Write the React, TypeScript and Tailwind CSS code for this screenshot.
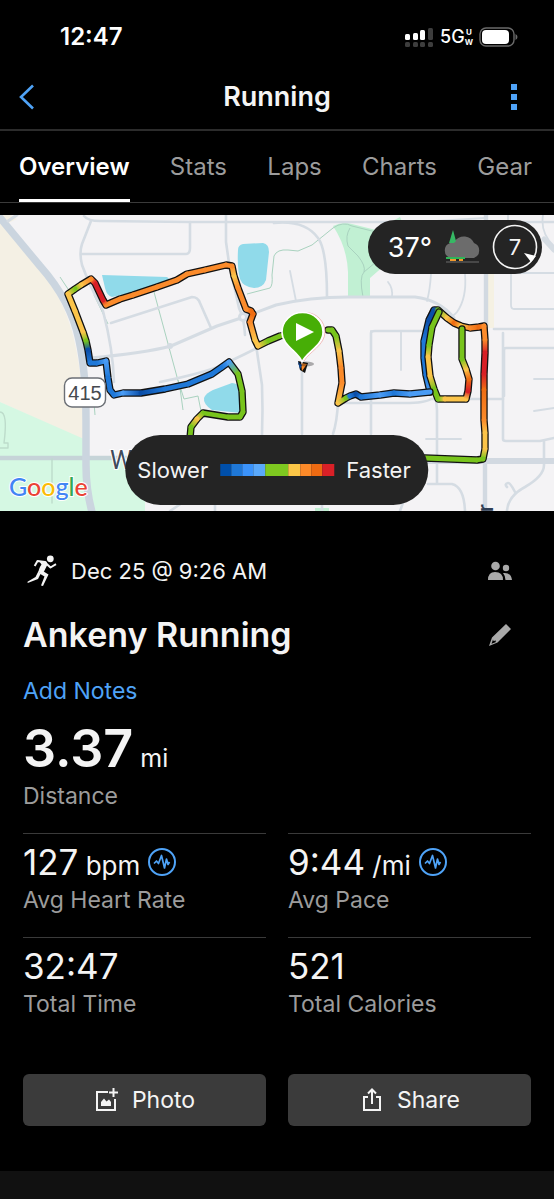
type RoutePoint = [number, number, string]

const navy = "#0b4ea8"
const blue = "#1f78d8"
const sky = "#4a9cf5"
const green = "#78c41c"
const yellow = "#fbc44a"
const orange = "#fb8b2b"
const deep = "#ee6c12"
const red = "#d81f26"

const westRoute: RoutePoint[] = [
  [302, 331, green],
  [280, 336, green],
  [268, 341, green],
  [258, 346, yellow],
  [255, 340, yellow],
  [250, 322, orange],
  [253, 314, deep],
  [251, 311, deep],
  [246, 309, orange],
  [238, 288, orange],
  [234, 276, yellow],
  [232, 266, orange],
  [226, 265, orange],
  [205, 270, orange],
  [187, 274, orange],
  [177, 280, orange],
  [157, 287, orange],
  [133, 295, orange],
  [120, 299, orange],
  [106, 305, orange],
  [103, 300, red],
  [95, 283, red],
  [91, 279, orange],
  [81, 285, yellow],
  [75, 289, green],
  [68, 294, yellow],
  [75, 311, yellow],
  [83, 332, yellow],
  [86, 341, green],
  [88, 350, navy],
  [90, 363, blue],
  [97, 363, blue],
  [106, 361, sky],
  [108, 378, blue],
  [110, 390, blue],
  [114, 395, blue],
  [123, 393, sky],
  [141, 393, navy],
  [165, 389, blue],
  [188, 384, blue],
  [212, 374, blue],
  [222, 367, blue],
  [229, 362, sky],
  [238, 374, green],
  [242, 391, green],
  [243, 412, green],
  [240, 417, green],
  [228, 417, green],
  [203, 413, green],
  [197, 419, yellow],
  [191, 427, green],
  [190, 438, green],
]

const eastRoute: RoutePoint[] = [
  [328, 330, green],
  [332, 330, green],
  [336, 336, green],
  [339, 351, yellow],
  [341, 368, orange],
  [342, 383, orange],
  [338, 403, yellow],
  [346, 398, green],
  [350, 396, blue],
  [356, 394, navy],
  [361, 397, blue],
  [380, 395, sky],
  [394, 393, blue],
  [410, 394, sky],
  [430, 392, sky],
]

const eastOuter: RoutePoint[] = [
  [430, 392, sky],
  [426, 375, blue],
  [424, 358, blue],
  [424, 341, blue],
  [429, 320, navy],
  [434, 310, navy],
  [438, 310, green],
  [447, 318, yellow],
  [454, 323, deep],
  [461, 326, yellow],
  [470, 328, orange],
  [479, 327, deep],
  [484, 326, orange],
  [485, 340, orange],
  [485, 353, red],
  [484, 374, red],
  [484, 390, deep],
  [484, 420, orange],
  [485, 433, yellow],
  [485, 449, yellow],
  [483, 459, green],
  [477, 460, green],
  [425, 458, green],
]

const eastInner: RoutePoint[] = [
  [439, 312, green],
  [432, 327, green],
  [429, 345, green],
  [428, 357, yellow],
  [430, 376, yellow],
  [434, 389, green],
  [438, 399, green],
  [445, 399, yellow],
  [466, 399, yellow],
  [468, 391, red],
  [469, 379, deep],
  [466, 369, yellow],
  [462, 359, green],
  [462, 329, green],
]

function Route({ id, points }: { id: string; points: RoutePoint[] }) {
  const line = points.map(([x, y]) => `${x},${y}`).join(" ")
  const parts = points.slice(1).map((to, i) => ({ from: points[i], to, key: `${id}-${i}` }))

  return (
    <g fill="none" strokeLinejoin="round" strokeLinecap="round">
      <defs>
        {parts.map(({ from, to, key }) => (
          <linearGradient
            key={key}
            id={key}
            gradientUnits="userSpaceOnUse"
            x1={from[0]}
            y1={from[1]}
            x2={to[0]}
            y2={to[1]}
          >
            <stop offset="0" stopColor={from[2]} />
            <stop offset="1" stopColor={to[2]} />
          </linearGradient>
        ))}
      </defs>
      <polyline points={line} stroke="#111" strokeWidth="7.4" />
      {parts.map(({ from, to, key }) => (
        <path
          key={key}
          d={`M${from[0]} ${from[1]}L${to[0]} ${to[1]}`}
          stroke={`url(#${key})`}
          strokeWidth="4.8"
        />
      ))}
    </g>
  )
}

function MapDrawing() {
  return (
    <svg
      viewBox="0 215 554 296"
      preserveAspectRatio="xMidYMid slice"
      className="block h-full w-full"
      role="img"
      aria-label="Route map"
    >
      <rect x="0" y="215" width="554" height="296" fill="#f4f3f5" />

      {/* Land and parks */}
      <path d="M0 222C32 258 60 290 70 325C80 355 84 400 84 440L0 402Z" fill="#f4f0e4" />
      <path d="M0 215H10L17 219L8 223L0 217Z" fill="#f4f0e4" />
      <path d="M0 402L84 439V511H0Z" fill="#d5f8e3" />
      <path d="M84 460H145V511H84Z" fill="#d5f8e3" />
      <path d="M333 226Q343 221 352 224L376 230L400 217L410 240L385 265L370 278V297H348V272Q347 247 333 226Z" fill="#c1f0d3" />
      <path d="M488 274H494V328H488Z" fill="#f5f1e3" />
      <path d="M315 508H329V511H315Z" fill="#c1f0d3" />

      {/* Water */}
      <path d="M102 275L167 277L174 283L112 297Q107 296 105 288Z" fill="#90daea" />
      <path d="M238 250Q238 245 243 244L263 243Q269 244 269 252L266 280Q263 288 254 288Q243 287 240 279Q237 268 238 250Z" fill="#90daea" />
      <path d="M204 398Q206 393 213 390L232 383Q238 383 241 390L241 413L212 410Q203 404 204 398Z" fill="#90daea" />

      {/* Trails */}
      <g fill="none" stroke="#a9d2bf" strokeWidth="1">
        <path d="M60 277L70 292M94 295L108 324M154 292L180 388L183 410M178 380L184 399L198 396L201 411" />
        <path d="M92 378L95 415" />
        <path d="M247 294L270 288Q273 285 272 275L274 256Q277 249 288 250L298 251L312 245L333 228Q343 221 352 226L376 232" />
        <path d="M350 228Q345 236 348 246L358 256Q366 266 364 272Q359 277 363 297M364 272L376 262" />
      </g>

      {/* Minor streets */}
      <g fill="none" stroke="#d5dce3" strokeLinecap="round" strokeLinejoin="round">
        <g strokeWidth="1.8">
          <path d="M290 271L296 301M388 282Q393 288 392 297M431 274Q430 290 427 301M465 274Q467 298 457 312Q452 318 446 318" />
          <path d="M371 331V434M401 331V370M508 215V230M511 273V305Q511 309 514 309H554M511 273H554" />
          <path d="M426 439H461M534 379H554M534 411L554 408" />
          <path d="M543 215Q540 233 554 246M485 218L420 222" />
        </g>
        <g strokeWidth="2.6">
          <path d="M84 216Q88 221 100 221L190 222H554" />
          <path d="M91 221L82 244Q79 253 82 265Q89 284 103 311Q113 349 114 382" />
          <path d="M82 254H186Q190 254 190 248V222" />
          <path d="M226 215V242L229 263L239 308Q244 317 245 335" />
          <path d="M111 323L192 297Q198 297 200 303L211 328" />
          <path d="M90 358Q145 353 171 346L217 326L244 317L276 305Q310 297 348 297H415Q440 300 454 318" strokeWidth="3" />
          <path d="M160 382Q195 375 218 367L245 354L257 348" />
          <path d="M256 345L262 385Q263 410 262 435" />
          <path d="M274 223Q305 220 318 238Q327 250 327 297" />
          <path d="M302 370V434M338 402Q337 422 333 434M344 403H405Q425 403 431 399H503" />
          <path d="M371 434V333Q371 331 375 331H424" />
          <path d="M436 399L437 410V483M428 484H452Q464 487 465 511M404 500L400 511M170 511L182 503M215 505V511" />
          <path d="M503 333V439Q503 441 506 441H540L554 438M504 396V350Q504 348 506 348H554M485 455V511" />
          <path d="M544 441V465Q544 476 525 487Q508 496 507 511M507 487Q504 484 508 483Q510 482 515 492" />
          <path d="M322 505V511M494 329H554" />
        </g>
        <path d="M486 215V328M485 461V511" strokeWidth="4.4" stroke="#d2d9e1" />
        <path d="M425 461H554" strokeWidth="6" stroke="#d2d9e1" />
        <path d="M544 239L554 250" strokeWidth="5" />
        <path d="M0 458H150" strokeWidth="4.4" stroke="#c6d4d8" />
        <path d="M52 459V503M0 412Q8 412 4 443H8V448H0" strokeWidth="1.4" stroke="#bddccb" />
        <path d="M-3 214Q10 230 40 266Q71 301 79 340Q86 372 86 420V465Q86 490 92 512" strokeWidth="7.5" stroke="#cbd5df" />
        <path d="M8 221L17 215" strokeWidth="3" />
      </g>
      <circle cx="243" cy="317" r="5" fill="#d5dce3" />
      <circle cx="243" cy="317" r="2" fill="#f4f3f5" />
      <circle cx="170" cy="346" r="3" fill="#d5dce3" />

      <Route id="west" points={westRoute} />
      <Route id="outer" points={eastOuter} />
      <Route id="inner" points={eastInner} />
      <Route id="east" points={eastRoute} />

      {/* Start pin */}
      <path d="M298 361L300 370L305 373L308 363Z" fill="#111" />
      <path d="M301 363L302 371L307 364Z" fill={orange} />
      <path d="M298 362L300 369L302 365Z" fill={navy} />
      <ellipse cx="306" cy="364" rx="8" ry="2.500" fill="#000" opacity="0.3" />
      <path d="M304 361C299 352 286 345 286 332A19 19 0 0 1 325 332C325 345 309 352 304 361Z" fill="#fff" stroke="#eaa" strokeWidth="0.8" />
      <path
        d="M302 362C299 352 282 346 282 332A20 19 0 0 1 323 332C323 346 306 352 302 362Z"
        fill="#47ae06"
        stroke="#fff"
        strokeWidth="1.6"
      />
      <path d="M296 323L314 332L296 341Z" fill="#fff" />

      {/* Road shield */}
      <rect x="64.5" y="378" width="41" height="29" rx="7.5" fill="#fff" stroke="#6b6f75" strokeWidth="1.4" />
      <text x="85" y="400" textAnchor="middle" fontSize="20" fill="#45494f" className="font-['Liberation_Sans',sans-serif]">
        415
      </text>
      <text
        x="110"
        y="469"
        fontSize="25"
        fill="#3f4b5c"
        stroke="#fff"
        strokeWidth="2"
        paintOrder="stroke"
        className="font-['Roboto',sans-serif]"
      >
        W
      </text>
      <text
        transform="translate(493 512) rotate(-90)"
        fontSize="22"
        fontWeight="500"
        fill="#2f3f55"
        className="font-['Roboto',sans-serif]"
      >
        r
      </text>

      <text
        x="9"
        y="496"
        fontSize="25"
        fontWeight="500"
        stroke="#fff"
        strokeWidth="2"
        paintOrder="stroke"
        className="font-['Lato',sans-serif]"
      >
        <tspan fill="#4285f4">G</tspan>
        <tspan fill="#ea4335">o</tspan>
        <tspan fill="#fbbc05">o</tspan>
        <tspan fill="#4285f4">g</tspan>
        <tspan fill="#34a853">l</tspan>
        <tspan fill="#ea4335">e</tspan>
      </text>
    </svg>
  )
}

function Weather() {
  return (
    <div className="absolute top-[5px] right-3 flex h-[54px] items-center gap-[9px] rounded-full bg-[#242424] pr-1 pl-5">
      <span className="text-[27px] leading-none text-white">37°</span>
      <svg width="42" height="36" viewBox="0 0 42 36" aria-hidden="true">
        <path d="M9 29A8 8 0 0 1 9 14A5 5 0 0 1 14 12A11 11 0 0 1 33 14A8 8 0 0 1 33 29Z" fill="#6c6c6c" />
        <path d="M12 1L15 12L13 14L8 14Z" fill="#36b864" />
        <path d="M5 28H24V30H5Z" fill="#2fb457" />
        <path d="M9 30H15V32H9ZM18 30H22V32H18Z" fill="#f29a2e" />
        <path d="M5 32.5H38V33.5H5Z" fill="#6c6c6c" />
      </svg>
      <svg width="46" height="46" viewBox="0 0 46 46" role="img" aria-label="Wind 7">
        <circle cx="23" cy="23" r="21.5" fill="none" stroke="#f4f4f4" strokeWidth="1.6" />
        <text x="23" y="31" textAnchor="middle" fontSize="22" fill="#f4f4f4">
          7
        </text>
        <path d="M32 29L44 32L39 38Z" fill="#fff" />
      </svg>
    </div>
  )
}

function PaceLegend() {
  return (
    <div className="absolute bottom-[6px] left-1/2 flex h-[70px] -translate-x-1/2 items-center gap-3 rounded-full bg-[#242424] pr-[18px] pl-3 text-[22px] text-[#f4f4f4]">
      <span>Slower</span>
      <div className="flex h-3">
        <i className="w-[11px] bg-[#004faa]" />
        <i className="w-[11px] bg-[#1f78d8]" />
        <i className="w-[11px] bg-[#3b93fb]" />
        <i className="w-[12px] bg-[#5aa9fb]" />
        <i className="w-[23px] bg-[#7ec820]" />
        <i className="w-[12px] bg-[#fbc647]" />
        <i className="w-[11px] bg-[#fc8a29]" />
        <i className="w-[11px] bg-[#ee6a12]" />
        <i className="w-[12px] bg-[#d92027]" />
      </div>
      <span>Faster</span>
    </div>
  )
}

function PulseIcon() {
  return (
    <svg width="28" height="28" viewBox="0 0 28 28" fill="none" stroke="#4fa3f7" aria-hidden="true">
      <circle cx="14" cy="14" r="13" strokeWidth="2" />
      <path
        d="M6 15.5L8.5 13L10.500 15.5L13.500 7.5L16.500 20L18.500 11L20 16.500L21.500 14"
        strokeWidth="1.7"
        strokeLinejoin="round"
      />
    </svg>
  )
}

function Stat({ value, unit, label, pulse }: { value: string; unit?: string; label: string; pulse?: boolean }) {
  return (
    <div className="h-[104px] border-t border-[#3a3a3a] pt-2">
      <div className="flex h-10 items-center gap-2">
        <p className="text-[35px] leading-10">
          {value}
          {unit && <span className="text-[26px] leading-none"> {unit}</span>}
        </p>
        {pulse && <PulseIcon />}
      </div>
      <p className="mt-0.5 text-[23px] leading-8 text-[#9c9c9c]">{label}</p>
    </div>
  )
}

export default function App() {
  return (
    <main className="min-h-screen bg-black font-['Inter',sans-serif] text-[#f4f4f4]">
      {/* Status bar */}
      <div className="flex h-16 items-center justify-between pt-2.5 pr-9 pl-[60px]">
        <span className="text-[24px] leading-none font-semibold text-white">12:47</span>
        <div className="flex items-center gap-1.5">
          <svg width="30" height="22" viewBox="0 0 30 22" aria-hidden="true">
            <g fill="#fff">
              <rect x="1" y="8" width="5" height="6" rx="1.5" />
              <rect x="9" y="7" width="5" height="7" rx="1.5" />
              <rect x="16" y="4" width="5" height="10" rx="1.5" />
            </g>
            <g fill="#3d3d3d">
              <rect x="24" y="2" width="5" height="12" rx="1.5" />
              <rect x="1" y="16" width="5" height="5" rx="1.5" />
              <rect x="9" y="16" width="5" height="5" rx="1.5" />
              <rect x="16" y="16" width="5" height="5" rx="1.5" />
              <rect x="24" y="16" width="5" height="5" rx="1.5" />
            </g>
          </svg>
          <div className="flex items-center font-medium text-white">
            <span className="text-[18px] leading-none">5G</span>
            <span className="flex flex-col text-center text-[8px] leading-[10px] font-bold">
              <span>U</span>
              <span>W</span>
            </span>
          </div>
          <svg width="39" height="20" viewBox="0 0 39 20" aria-hidden="true">
            <rect x="1" y="1" width="34" height="18" rx="6" fill="none" stroke="#6a6a6a" strokeWidth="1.4" />
            <rect x="3" y="3" width="27" height="14" rx="4" fill="#fff" />
            <path d="M36.500 7Q38.500 8 38.500 10T36.500 13Z" fill="#6a6a6a" />
          </svg>
        </div>
      </div>

      <header className="flex h-[67px] items-center justify-between border-b-2 border-[#2c2c2c] px-[18px]">
        <button aria-label="Back" className="flex w-11">
          <svg width="18" height="26" viewBox="0 0 18 26" fill="none" stroke="#4fa3f7" strokeWidth="2.6">
            <path d="M15 1.500L3 13L15 24.500" />
          </svg>
        </button>
        <h1 className="text-[27px] leading-none font-semibold">Running</h1>
        <button aria-label="More" className="flex w-11 justify-center">
          <svg width="12" height="28" viewBox="0 0 12 28" fill="#4fa3f7">
            <path d="M3 1H9V7H3ZM3 11H9V17H3ZM3 21H9V27H3Z" />
          </svg>
        </button>
      </header>

      <nav className="flex h-[72px] justify-between border-b border-[#3a3a3a] pr-[22px] pl-[19px] text-[24px] text-[#9c9c9c]">
        <a href="#overview" className="flex items-center border-b-3 border-white pt-[3px] font-semibold text-white">
          Overview
        </a>
        <a href="#stats" className="flex items-center">Stats</a>
        <a href="#laps" className="flex items-center">Laps</a>
        <a href="#charts" className="flex items-center">Charts</a>
        <a href="#gear" className="flex items-center">Gear</a>
      </nav>

      <section className="relative mt-3 h-[296px] overflow-hidden">
        <MapDrawing />
        <Weather />
        <PaceLegend />
      </section>

      <section className="px-[23px] pt-11 pb-[45px]">
        <div className="flex h-8 items-center">
          <svg width="36" height="32" viewBox="0 0 36 32" fill="none" stroke="#f4f4f4" strokeLinejoin="round" aria-hidden="true">
            <circle cx="27.300" cy="3.800" r="3.400" fill="#f4f4f4" stroke="none" />
            <path d="M22 7.500L27.500 12.500L33 9.200" strokeWidth="2" />
            <path d="M22 7L14.500 6L11.700 11" strokeWidth="2" />
            <path d="M16 6L22.500 6Q25 7.500 24 10.500L21 16.500L18 19L15.500 17Q15.500 14 18.500 9.500Z" fill="#f4f4f4" stroke="none" />
            <path d="M19 15.500L25.500 19.500L20 31L18 30.500L21.500 21.500L16.500 18.500Z" fill="#f4f4f4" stroke="none" />
            <path d="M15.500 16L17.500 19L15 24L4.700 28L4.500 26.800L12.500 22Z" fill="#f4f4f4" stroke="none" />
          </svg>
          <p className="ml-3 text-[22px]">Dec 25 @ 9:26 AM</p>
          <button aria-label="Privacy" className="mr-[18px] ml-auto">
            <svg width="26" height="20" viewBox="0 0 26 20" fill="#a9a9a9">
              <circle cx="8.500" cy="5" r="4.300" />
              <circle cx="19" cy="7" r="3.200" />
              <path d="M1 19Q1 11 8 11Q16 11 16 19ZM16 12Q24 11 25 19H18.500Q18.500 15 16 12Z" />
            </svg>
          </button>
        </div>

        <div className="mt-7 flex h-10 items-center justify-between">
          <h2 className="text-[34px] leading-10 font-semibold">Ankeny Running</h2>
          <button aria-label="Edit title" className="mr-[19px]">
            <svg width="24" height="24" viewBox="0 0 24 24" fill="#a9a9a9">
              <path d="M18 1L23 6L9.500 19.500L1 23L4 14.500ZM5 16.500L3.500 20.800L7.500 19.200L8 17.500L5.500 18Z" fillRule="evenodd" />
            </svg>
          </button>
        </div>

        <a href="#notes" className="mt-5 inline-block text-[23px] leading-8 text-[#4fa3f7]">
          Add Notes
        </a>

        <p className="mt-5 text-[52px] leading-11 font-semibold">
          3.37<span className="text-[25px] font-normal"> mi</span>
        </p>
        <p className="text-[23px] leading-8 text-[#9c9c9c]">Distance</p>

        <div className="mt-[21px] grid grid-cols-2 gap-x-[22px]">
          <Stat value="127" unit="bpm" label="Avg Heart Rate" pulse />
          <Stat value="9:44" unit="/mi" label="Avg Pace" pulse />
          <Stat value="32:47" label="Total Time" />
          <Stat value="521" label="Total Calories" />
        </div>

        <div className="mt-[33px] grid grid-cols-2 gap-x-[22px] text-[23px]">
          <button className="flex h-[52px] items-center justify-center gap-3 rounded-md bg-[#3b3b3b]">
            <svg width="26" height="26" viewBox="0 0 26 26" fill="none" stroke="#f4f4f4" strokeWidth="2" aria-hidden="true">
              <path d="M14 5H3V23H21V12M19.500 1V10M15 5.500H24" />
              <path d="M7 19V15L10 11.500L12.500 14.500L15 12.500L17 15V19Z" fill="#f4f4f4" stroke="none" />
            </svg>
            Photo
          </button>
          <button className="flex h-[52px] items-center justify-center gap-3 rounded-md bg-[#3b3b3b]">
            <svg width="26" height="26" viewBox="0 0 26 26" fill="none" stroke="#f4f4f4" strokeWidth="2" aria-hidden="true">
              <path d="M9 10H5V23H21V10H17M13 17V3M9 6.500L13 2.500L17 6.500" />
            </svg>
            Share
          </button>
        </div>
      </section>

      <div className="h-7 bg-[#111]" />
    </main>
  )
}
